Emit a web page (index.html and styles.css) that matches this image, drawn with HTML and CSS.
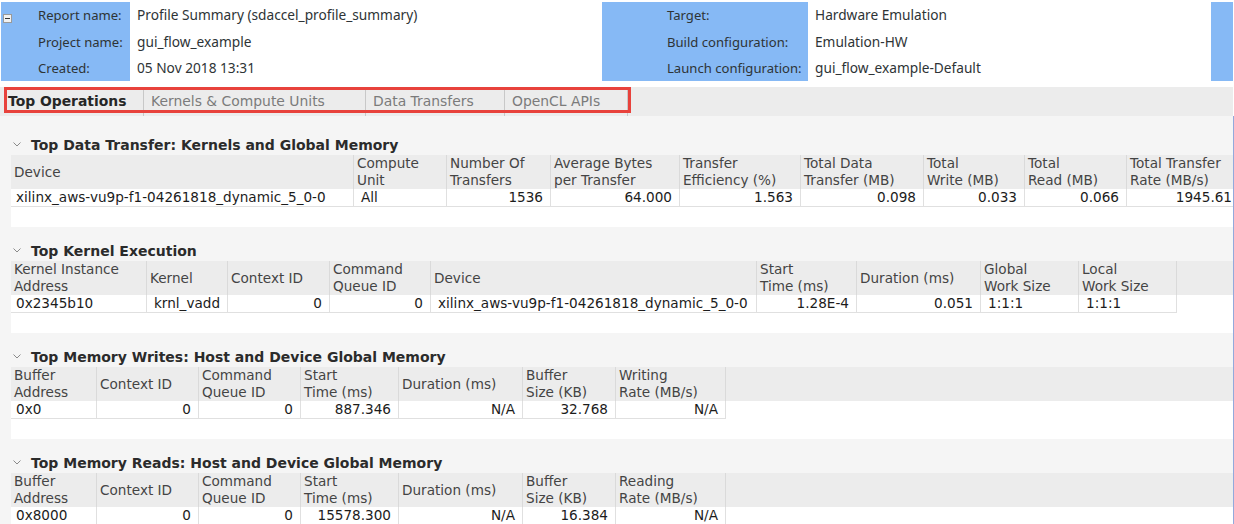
FILE: index.html
```html
<!DOCTYPE html>
<html>
<head>
<meta charset="utf-8">
<title>Profile Summary</title>
<link rel="stylesheet" href="styles.css">
</head>
<body>
<div class="page">
  <header class="summary">
    <div class="lbl-panel left">
      <svg class="collapse" width="9" height="9" viewBox="0 0 9 9"><rect x="0.5" y="0.5" width="8" height="8" fill="#f2f2f2" stroke="#9a9a9a"/><line x1="2" y1="4.5" x2="7" y2="4.5" stroke="#333" stroke-width="1"/></svg>
      <div class="lbls">
        <div class="row">Report name:</div>
        <div class="row">Project name:</div>
        <div class="row">Created:</div>
      </div>
    </div>
    <div class="vals">
      <div class="row">Profile Summary (sdaccel_profile_summary)</div>
      <div class="row">gui_flow_example</div>
      <div class="row">05 Nov 2018 13:31</div>
    </div>
    <div class="lbl-panel right">
      <div class="lbls">
        <div class="row">Target:</div>
        <div class="row">Build configuration:</div>
        <div class="row">Launch configuration:</div>
      </div>
    </div>
    <div class="vals">
      <div class="row">Hardware Emulation</div>
      <div class="row">Emulation-HW</div>
      <div class="row">gui_flow_example-Default</div>
    </div>
    <div class="lbl-panel edge"></div>
  </header>

  <nav class="tabs">
    <div class="tab active">Top Operations</div>
    <div class="tab">Kernels &amp; Compute Units</div>
    <div class="tab">Data Transfers</div>
    <div class="tab">OpenCL APIs</div>
    <div class="highlight"></div>
  </nav>

  <main class="content">
    <section class="sec">
      <h2 class="sec-title"><svg class="chev" width="8" height="5" viewBox="0 0 8 5"><polyline points="0.5,0.5 4,4 7.5,0.5" fill="none" stroke="#8a8a8a" stroke-width="1"/></svg>Top Data Transfer: Kernels and Global Memory</h2>
      <div class="tbl t1">
        <div class="thead">
          <div class="th">Device</div>
          <div class="th">Compute<br>Unit</div>
          <div class="th">Number Of<br>Transfers</div>
          <div class="th">Average Bytes<br>per Transfer</div>
          <div class="th">Transfer<br>Efficiency (%)</div>
          <div class="th">Total Data<br>Transfer (MB)</div>
          <div class="th">Total<br>Write (MB)</div>
          <div class="th">Total<br>Read (MB)</div>
          <div class="th">Total Transfer<br>Rate (MB/s)</div>
        </div>
        <div class="trow">
          <div class="td first">xilinx_aws-vu9p-f1-04261818_dynamic_5_0-0</div>
          <div class="td">All</div>
          <div class="td num">1536</div>
          <div class="td num">64.000</div>
          <div class="td num">1.563</div>
          <div class="td num">0.098</div>
          <div class="td num">0.033</div>
          <div class="td num">0.066</div>
          <div class="td num">1945.61</div>
        </div>
        <div class="filler"></div>
      </div>
    </section>

    <section class="sec">
      <h2 class="sec-title"><svg class="chev" width="8" height="5" viewBox="0 0 8 5"><polyline points="0.5,0.5 4,4 7.5,0.5" fill="none" stroke="#8a8a8a" stroke-width="1"/></svg>Top Kernel Execution</h2>
      <div class="tbl t2">
        <div class="thead">
          <div class="th">Kernel Instance<br>Address</div>
          <div class="th">Kernel</div>
          <div class="th">Context ID</div>
          <div class="th">Command<br>Queue ID</div>
          <div class="th">Device</div>
          <div class="th">Start<br>Time (ms)</div>
          <div class="th">Duration (ms)</div>
          <div class="th">Global<br>Work Size</div>
          <div class="th">Local<br>Work Size</div>
        </div>
        <div class="trow">
          <div class="td first">0x2345b10</div>
          <div class="td">krnl_vadd</div>
          <div class="td num">0</div>
          <div class="td num">0</div>
          <div class="td">xilinx_aws-vu9p-f1-04261818_dynamic_5_0-0</div>
          <div class="td num">1.28E-4</div>
          <div class="td num">0.051</div>
          <div class="td">1:1:1</div>
          <div class="td">1:1:1</div>
        </div>
        <div class="filler"></div>
      </div>
    </section>

    <section class="sec">
      <h2 class="sec-title"><svg class="chev" width="8" height="5" viewBox="0 0 8 5"><polyline points="0.5,0.5 4,4 7.5,0.5" fill="none" stroke="#8a8a8a" stroke-width="1"/></svg>Top Memory Writes: Host and Device Global Memory</h2>
      <div class="tbl t3">
        <div class="thead">
          <div class="th">Buffer<br>Address</div>
          <div class="th">Context ID</div>
          <div class="th">Command<br>Queue ID</div>
          <div class="th">Start<br>Time (ms)</div>
          <div class="th">Duration (ms)</div>
          <div class="th">Buffer<br>Size (KB)</div>
          <div class="th">Writing<br>Rate (MB/s)</div>
        </div>
        <div class="trow">
          <div class="td first">0x0</div>
          <div class="td num">0</div>
          <div class="td num">0</div>
          <div class="td num">887.346</div>
          <div class="td num">N/A</div>
          <div class="td num">32.768</div>
          <div class="td num">N/A</div>
        </div>
        <div class="filler"></div>
      </div>
    </section>

    <section class="sec">
      <h2 class="sec-title"><svg class="chev" width="8" height="5" viewBox="0 0 8 5"><polyline points="0.5,0.5 4,4 7.5,0.5" fill="none" stroke="#8a8a8a" stroke-width="1"/></svg>Top Memory Reads: Host and Device Global Memory</h2>
      <div class="tbl t3">
        <div class="thead">
          <div class="th">Buffer<br>Address</div>
          <div class="th">Context ID</div>
          <div class="th">Command<br>Queue ID</div>
          <div class="th">Start<br>Time (ms)</div>
          <div class="th">Duration (ms)</div>
          <div class="th">Buffer<br>Size (KB)</div>
          <div class="th">Reading<br>Rate (MB/s)</div>
        </div>
        <div class="trow">
          <div class="td first">0x8000</div>
          <div class="td num">0</div>
          <div class="td num">0</div>
          <div class="td num">15578.300</div>
          <div class="td num">N/A</div>
          <div class="td num">16.384</div>
          <div class="td num">N/A</div>
        </div>
        <div class="filler"></div>
      </div>
    </section>
  </main>
</div>
</body>
</html>
```

FILE: styles.css
```css
* { box-sizing: border-box; }
html, body { margin: 0; padding: 0; }
body {
  width: 1234px;
  height: 524px;
  overflow: hidden;
  background: #ffffff;
  font-family: "DejaVu Sans", sans-serif;
}
.page { width: 1234px; }

/* ---------- summary header ---------- */
.summary {
  display: grid;
  grid-template-columns: 129px 472px 206px 403px 22px;
  margin-left: 1px;
  padding-top: 2px;
  padding-bottom: 6px;
  background: #fff;
  font-family: "Noto Sans", "Open Sans", sans-serif;
  font-size: 13.7px;
  color: #2e3436;
}
.lbl-panel {
  background: #86b9f5;
  height: 79px;
  display: flex;
}
.lbl-panel.left { padding-left: 2px; }
.lbl-panel.right { padding-left: 65px; }
.collapse { margin-top: 12px; flex: none; }
.lbl-panel.left .lbls { margin-left: 26px; }
.lbls, .vals { display: flex; flex-direction: column; }
.lbls { font-size: 13.1px; }
.vals { padding-left: 7px; height: 79px; }
.row {
  height: 26.6px;
  line-height: 26.6px;
  white-space: nowrap;
}

/* ---------- tabs ---------- */
.tabs {
  position: relative;
  display: flex;
  height: 29px;
  width: 1233px;
  background: #ececec;
  font-size: 13.9px;
}
.tab {
  height: 29px;
  line-height: 29px;
  padding-left: 7px;
  color: #7b7b7b;
  border-right: 1px solid #c8c8c8;
  white-space: nowrap;
}
.tab:nth-child(1) { width: 144px; padding-left: 8px; }
.tab:nth-child(2) { width: 222px; }
.tab:nth-child(3) { width: 139px; }
.tab:nth-child(4) { width: 123px; }
.tab.active { color: #262626; font-weight: bold; }
.highlight {
  position: absolute;
  left: 4px;
  top: 0;
  width: 627px;
  height: 26px;
  border: 3px solid #e8423c;
  pointer-events: none;
}

/* ---------- content ---------- */
.content {
  width: 1234px;
  height: 408px;
  background: #f5f5f5;
  border-right: 1px solid #93a9dc;
  padding-top: 17px;
  overflow: hidden;
}
.sec + .sec { margin-top: 12px; }
.sec-title {
  margin: 0;
  height: 22px;
  line-height: 22px;
  display: flex;
  align-items: center;
  font-size: 14px;
  font-weight: bold;
  color: #2b2b2b;
  white-space: nowrap;
  padding-top: 1px;
}
.chev { margin-left: 13px; margin-right: 10px; flex: none; }

.tbl {
  margin-left: 11px;
  width: 1222px;
  background: #fff;
  overflow: hidden;
  font-size: 13.6px;
}
.thead, .trow { display: grid; }
.t1 .thead, .t1 .trow { grid-template-columns: 343px 93px 104px 129px 121px 123px 101px 102px 106px; }
.t2 .thead, .t2 .trow { grid-template-columns: 136px 81px 102px 101px 326px 100px 124px 98px 98px; }
.t3 .thead, .t3 .trow { grid-template-columns: 86px 102px 102px 98px 124px 93px 110px; }

.thead {
  height: 34px;
  background: #ececec;
}
.th {
  display: flex;
  align-items: center;
  padding-left: 3px;
  line-height: 17px;
  color: #444;
  border-right: 1px solid #dadada;
  white-space: nowrap;
  overflow: hidden;
}
.t1 .th:last-child { border-right: 0; }
.trow { height: 18px; }
.td {
  height: 18px;
  line-height: 17px;
  padding: 0 7px 0 7px;
  color: #1c1c1c;
  border-right: 1px solid #e0e0e0;
  border-bottom: 1px solid #e0e0e0;
  white-space: nowrap;
  overflow: hidden;
}
.t1 .td:last-child { border-right: 0; padding-right: 1px; }
.td.first { padding-left: 5px; }
.td.num { text-align: right; }
.filler { height: 20px; background: #fff; }
```
